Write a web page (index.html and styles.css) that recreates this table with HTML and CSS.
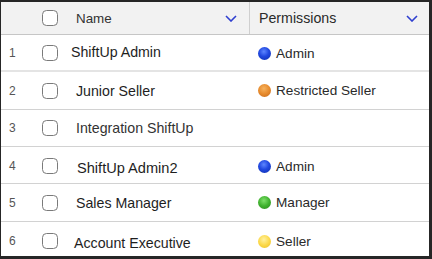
FILE: index.html
```html
<!DOCTYPE html>
<html>
<head>
<meta charset="utf-8">
<link rel="stylesheet" href="styles.css">
</head>
<body>
<div class="table">
  <div class="row head">
    <div class="num"></div>
    <div class="check"><span class="box"></span></div>
    <div class="name">
      <span>Name</span>
      <svg class="chev" width="12" height="7" viewBox="0 0 12 7"><path d="M1 1 L6 6 L11 1" fill="none" stroke="#2f3fd0" stroke-width="1.6"/></svg>
    </div>
    <div class="perm">
      <span>Permissions</span>
      <svg class="chev" width="12" height="7" viewBox="0 0 12 7"><path d="M1 1 L6 6 L11 1" fill="none" stroke="#2f3fd0" stroke-width="1.6"/></svg>
    </div>
  </div>
  <div class="row r1 sep-light">
    <div class="num">1</div>
    <div class="check"><span class="box"></span></div>
    <div class="name n-left">ShiftUp Admin</div>
    <div class="perm"><span class="dot blue"></span>Admin</div>
  </div>
  <div class="row r2">
    <div class="num">2</div>
    <div class="check"><span class="box"></span></div>
    <div class="name">Junior Seller</div>
    <div class="perm"><span class="dot orange"></span>Restricted Seller</div>
  </div>
  <div class="row r3">
    <div class="num">3</div>
    <div class="check"><span class="box"></span></div>
    <div class="name n-light">Integration ShiftUp</div>
    <div class="perm"></div>
  </div>
  <div class="row r4">
    <div class="num">4</div>
    <div class="check"><span class="box"></span></div>
    <div class="name n-wide">ShiftUp Admin2</div>
    <div class="perm"><span class="dot blue"></span>Admin</div>
  </div>
  <div class="row r5">
    <div class="num">5</div>
    <div class="check"><span class="box"></span></div>
    <div class="name">Sales Manager</div>
    <div class="perm"><span class="dot green"></span>Manager</div>
  </div>
  <div class="row r6 last">
    <div class="num">6</div>
    <div class="check"><span class="box"></span></div>
    <div class="name n-narrow">Account Executive</div>
    <div class="perm"><span class="dot yellow"></span>Seller</div>
  </div>
</div>
</body>
</html>
```
FILE: styles.css
```css
* { box-sizing: border-box; }
html, body { margin: 0; padding: 0; }
body {
  background: #262626;
  width: 432px;
  height: 259px;
  overflow: hidden;
  font-family: "Liberation Sans", Arial, sans-serif;
  color: #1e1e1e;
}
.table {
  margin: 2px 3px 3px 1px;
  height: 254px;
  background: #fff;
  display: grid;
  grid-template-rows: 33px 37px 38px 37px 37px 38px 1fr;
}
.row {
  display: flex;
  align-items: stretch;
  border-bottom: 1px solid #d2d2d2;
}
.row.sep-light { border-bottom: 2px solid #e4e4e4; }
.row.last { border-bottom: none; }
.head {
  background: #f2f2f2;
  border-bottom: 1px solid #c6c6c6;
  color: #333;
  font-size: 13.8px;
}
.num {
  width: 41px;
  padding-left: 8px;
  display: flex;
  align-items: center;
  font-size: 12px;
  color: #555;
}
.check {
  width: 17px;
  display: flex;
  align-items: center;
}
.box {
  display: block;
  width: 16px;
  height: 16px;
  border: 1px solid #7a7a7a;
  border-radius: 4.5px;
  background: #fff;
}
.name {
  width: 190px;
  padding-left: 17px;
  padding-right: 12px;
  display: flex;
  align-items: center;
  font-size: 14.2px;
}
.head .name { justify-content: space-between; font-size: 13.4px; }
.n-left { padding-left: 12px; }
.n-light { color: #333; font-size: 14.2px; }
.n-wide { padding-left: 18px; font-size: 14.6px; }
.n-narrow { padding-left: 15px; }
.perm {
  flex: 1;
  padding-left: 9px;
  padding-right: 11px;
  display: flex;
  align-items: center;
  font-size: 13.6px;
  color: #2a2a2a;
}
.head .perm {
  border-left: 1px solid #cfcfcf;
  justify-content: space-between;
  font-size: 14.2px;
  padding-left: 9px;
}
.chev { display: block; margin-top: 1px; }
.r1 .name { padding-bottom: 2px; }
.r1 .perm, .r1 .num, .r1 .check { padding-top: 1px; }
.r4 .name { padding-top: 6px; }
.r4 .perm, .r4 .num, .r4 .check { padding-top: 2px; }
.r6 .name { padding-top: 8px; }
.r6 .perm, .r6 .num, .r6 .check { padding-top: 4px; }
.dot {
  display: inline-block;
  width: 13px;
  height: 13px;
  border-radius: 50%;
  margin-right: 5px;
  flex: none;
}
.blue { background: radial-gradient(circle at 45% 35%, #5d86ff 0%, #2148e0 45%, #0c2da8 100%); }
.orange { background: radial-gradient(circle at 45% 35%, #f6b25e 0%, #e68a2c 50%, #c2661a 100%); }
.green { background: radial-gradient(circle at 45% 35%, #7ee06a 0%, #3fb12e 50%, #2a861c 100%); }
.yellow { background: radial-gradient(circle at 45% 35%, #fff1a0 0%, #fcd94a 50%, #e9bd22 100%); }
```
